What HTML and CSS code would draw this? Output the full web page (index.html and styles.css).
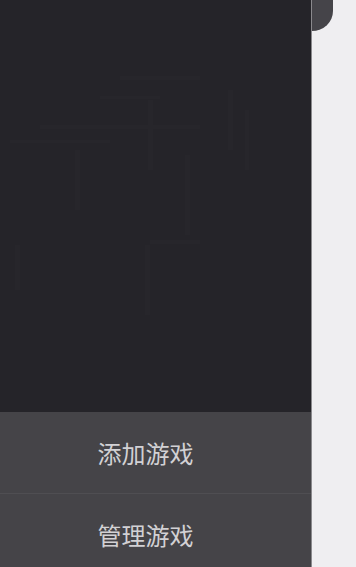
FILE: index.html
```html
<!DOCTYPE html>
<html lang="zh-CN">
<head>
    <meta charset="UTF-8">
    <meta name="viewport" content="width=device-width, initial-scale=1.0">
    <title>游戏</title>
    <link rel="stylesheet" href="styles.css">
</head>
<body>
    <div class="screen">
        <!-- 左侧抽屉 -->
        <div class="drawer">
            <div class="drawer-top">
                <!-- 背景里隐约的线条 -->
                <svg class="ghost" width="311" height="412" viewBox="0 0 311 412">
                    <g fill="#27262b">
                        <rect x="120" y="76" width="80" height="4"/>
                        <rect x="100" y="96" width="60" height="3"/>
                        <rect x="40" y="125" width="160" height="4"/>
                        <rect x="10" y="140" width="100" height="3"/>
                        <rect x="75" y="150" width="5" height="60"/>
                        <rect x="148" y="100" width="5" height="70"/>
                        <rect x="185" y="155" width="5" height="80"/>
                        <rect x="228" y="90" width="5" height="60"/>
                        <rect x="245" y="110" width="4" height="60"/>
                        <rect x="150" y="240" width="50" height="4"/>
                        <rect x="145" y="245" width="5" height="70"/>
                        <rect x="15" y="245" width="5" height="45"/>
                    </g>
                </svg>
            </div>
            <div class="menu">
                <div class="menu-item">添加游戏</div>
                <div class="menu-item">管理游戏</div>
            </div>
        </div>
        <div class="tab"></div>
        <div class="content"></div>
    </div>
</body>
</html>
```
FILE: styles.css
```css
body {
    margin: 0;
    padding: 0;
    font-family: "Noto Sans CJK SC", "Noto Sans", sans-serif;
    background-color: #efeef1;
}

.screen {
    position: relative;
    display: flex;
    width: 356px;
    height: 567px;
    overflow: hidden;
}

.drawer {
    display: flex;
    flex-direction: column;
    width: 311px;
    flex-shrink: 0;
    background-color: #252429;
    border-right: 1px solid #8a898d;
}

.drawer-top {
    height: 412px;
    flex-shrink: 0;
    overflow: hidden;
}

.ghost {
    display: block;
}

.menu {
    flex-shrink: 0;
}

.menu-item {
    height: 81px;
    display: flex;
    align-items: center;
    justify-content: center;
    padding-right: 20px;
    background-color: #454448;
    border-bottom: 1px solid #4f4e52;
    color: #d2d1d4;
    font-size: 24px;
}

.tab {
    position: absolute;
    left: 312px;
    top: 0;
    width: 21px;
    height: 31px;
    background-color: #454449;
    border-bottom-right-radius: 21px 20px;
}

.content {
    flex: 1;
    background-color: #efeef1;
}
```
